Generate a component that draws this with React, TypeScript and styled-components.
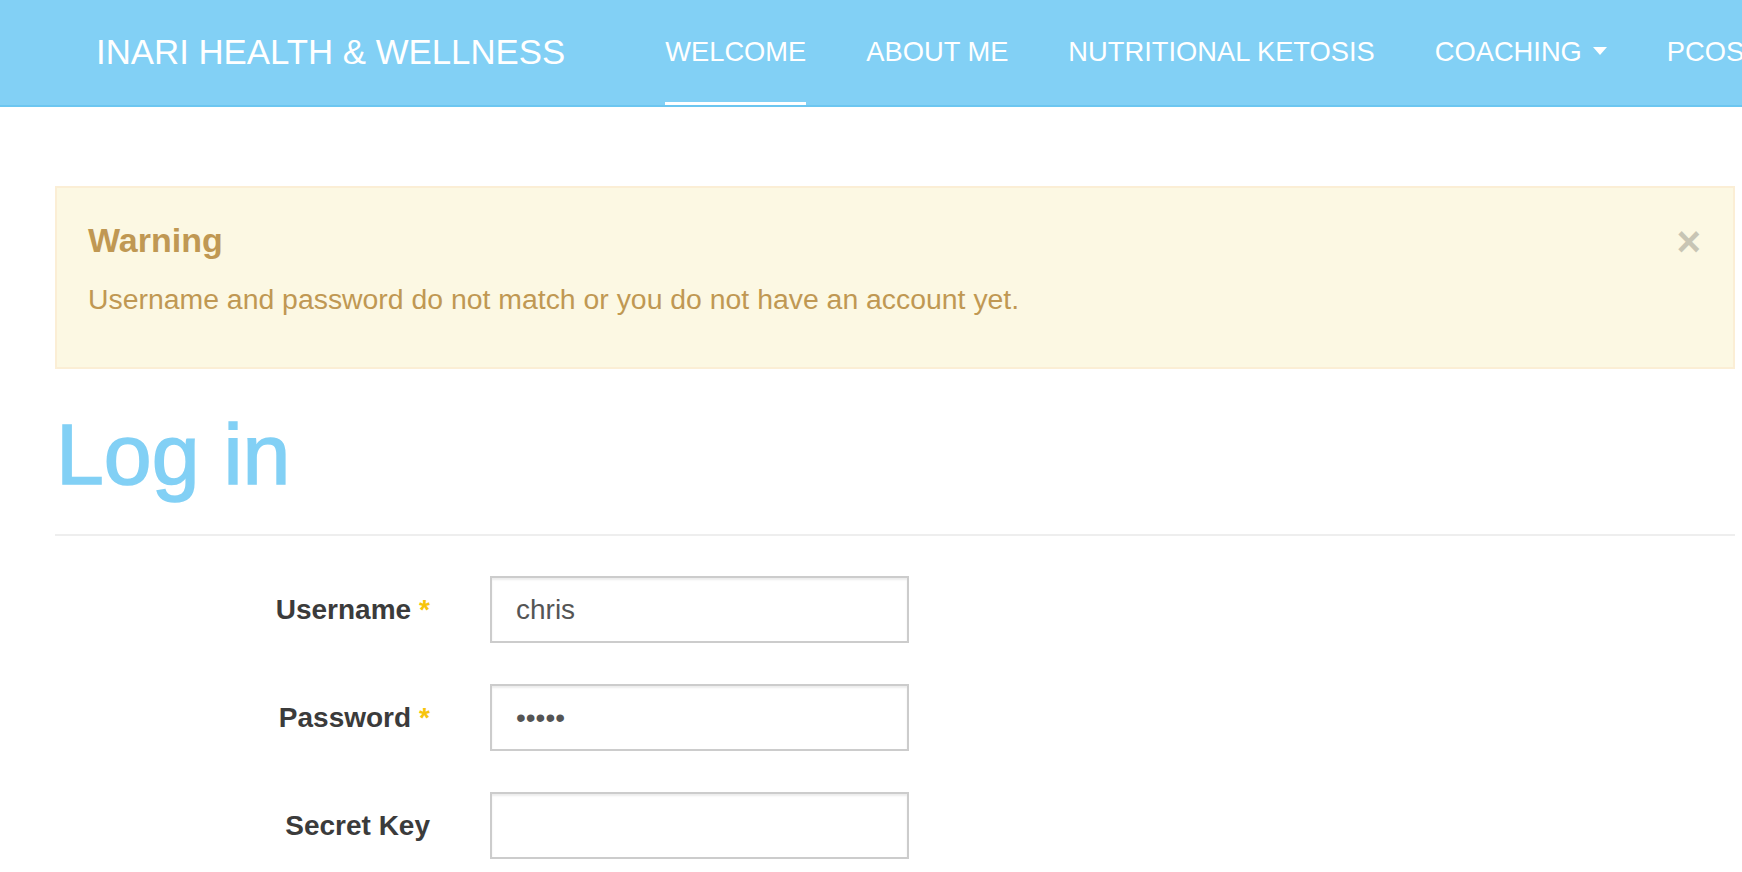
import styled, { createGlobalStyle } from "styled-components";

const GlobalStyle = createGlobalStyle`
  html, body {
    margin: 0;
    padding: 0;
    background: #fff;
    overflow: hidden;
  }
  body {
    font-family: "Liberation Sans", Arial, Helvetica, sans-serif;
    color: #333;
  }
  * {
    box-sizing: border-box;
  }
`;

const Navbar = styled.header`
  display: flex;
  align-items: flex-start;
  height: 107px;
  background: #82d0f5;
  border-bottom: 2px solid #6cc6f0;
  white-space: nowrap;
  overflow: hidden;
`;

const Brand = styled.a`
  display: block;
  flex: none;
  padding-left: 96px;
  font-size: 34.8px;
  line-height: 104px;
  color: #fff;
  text-decoration: none;
`;

const NavList = styled.ul`
  display: flex;
  flex: none;
  margin: 0 0 0 70px;
  padding: 0;
  list-style: none;
`;

const NavItem = styled.li`
  padding: 0 30px;
`;

const NavLink = styled.a<{ $active?: boolean }>`
  display: flex;
  align-items: center;
  gap: 11px;
  height: 106px;
  padding-top: 2px;
  font-size: 27.3px;
  color: #fff;
  text-decoration: none;
  border-bottom: 4px solid ${(p) => (p.$active ? "#fff" : "transparent")};
`;

const Caret = styled.span`
  display: inline-block;
  width: 0;
  height: 0;
  border-left: 7px solid transparent;
  border-right: 7px solid transparent;
  border-top: 8px solid #fff;
  margin-top: -2px;
`;

const Container = styled.main`
  padding: 79px 7px 0 55px;
`;

const Alert = styled.div`
  display: flex;
  justify-content: space-between;
  align-items: flex-start;
  padding: 32px 0 48px 31px;
  background: #fcf8e3;
  border: 2px solid #fbeed5;
  color: #c09853;
`;

const AlertTitle = styled.h4`
  margin: 0 0 19px;
  font-size: 34px;
  line-height: 40px;
  font-weight: bold;
`;

const AlertText = styled.p`
  margin: 0;
  font-size: 28.4px;
  line-height: 40px;
`;

const Close = styled.button`
  margin: 2px 32px 0 0;
  padding: 0;
  border: 0;
  background: transparent;
  font-family: "Liberation Sans", Arial, sans-serif;
  font-size: 42px;
  line-height: 40px;
  font-weight: bold;
  color: #000;
  opacity: 0.2;
  cursor: pointer;
`;

const Title = styled.h1`
  margin: 38px 0 0 1px;
  font-size: 86px;
  line-height: 95px;
  font-weight: normal;
  color: #82d0f5;
  -webkit-text-stroke: 1.6px #82d0f5;
`;

const Divider = styled.hr`
  margin: 32px 0 0;
  border: 0;
  border-top: 2px solid #eee;
`;

const Form = styled.form`
  display: grid;
  grid-template-columns: 375px 419px;
  column-gap: 60px;
  row-gap: 41px;
  align-items: center;
  padding-top: 40px;
`;

const Label = styled.label`
  text-align: right;
  font-size: 28px;
  font-weight: bold;
  color: #3b3b3b;
`;

const Required = styled.span`
  color: #f7c40d;
  margin-left: 8px;
`;

const Input = styled.input`
  display: block;
  width: 419px;
  height: 67px;
  padding: 0 24px;
  border: 2px solid #ccc;
  border-radius: 0;
  box-shadow: inset 0 2px 2px rgba(0, 0, 0, 0.075);
  font-family: "Liberation Sans", Arial, sans-serif;
  font-size: 28px;
  color: #555;
  background: #fff;
  outline: none;
`;

const navItems = [
  { label: "WELCOME", active: true },
  { label: "ABOUT ME" },
  { label: "NUTRITIONAL KETOSIS" },
  { label: "COACHING", caret: true },
  { label: "PCOS" },
];

export default function App() {
  return (
    <>
      <GlobalStyle />
      <Navbar>
        <Brand href="#">INARI HEALTH &amp; WELLNESS</Brand>
        <NavList>
          {navItems.map((item) => (
            <NavItem key={item.label}>
              <NavLink href="#" $active={item.active}>
                {item.label}
                {item.caret && <Caret />}
              </NavLink>
            </NavItem>
          ))}
        </NavList>
      </Navbar>
      <Container>
        <Alert>
          <div>
            <AlertTitle>Warning</AlertTitle>
            <AlertText>Username and password do not match or you do not have an account yet.</AlertText>
          </div>
          <Close type="button" aria-label="Close">×</Close>
        </Alert>
        <Title>Log in</Title>
        <Divider />
        <Form>
          <Label htmlFor="username">
            Username<Required>*</Required>
          </Label>
          <Input id="username" type="text" defaultValue="chris" />
          <Label htmlFor="password">
            Password<Required>*</Required>
          </Label>
          <Input id="password" type="password" defaultValue="chris" />
          <Label htmlFor="secret">Secret Key</Label>
          <Input id="secret" type="text" />
        </Form>
      </Container>
    </>
  );
}
